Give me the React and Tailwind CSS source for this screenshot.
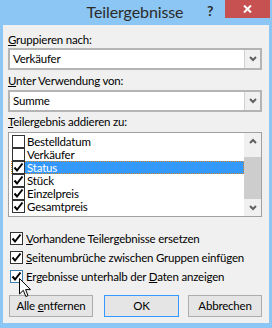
import React from "react";

const font = { fontFamily: 'Lato, "Open Sans", sans-serif' };

function Check() {
  return (
    <svg width="13" height="13" viewBox="0 0 13 13" className="block">
      <path d="M2.5 6.5 L5 9.5 L10.5 2.5" fill="none" stroke="#000" strokeWidth="2" />
    </svg>
  );
}

function Box({ checked, hover }) {
  return (
    <div
      className={
        "w-[13px] h-[13px] shrink-0 border bg-white relative " +
        (hover ? "border-[#3c7fb1]" : "border-[#333333]")
      }
    >
      {checked && (
        <div className="absolute -left-px -top-px">
          <Check />
        </div>
      )}
    </div>
  );
}

function Chevron({ up }) {
  return (
    <svg width="8" height="6" viewBox="0 0 8 6" className="block">
      <path
        d={up ? "M1 5 L4 2 L7 5" : "M1 1 L4 4 L7 1"}
        fill="none"
        stroke="#606060"
        strokeWidth="2"
      />
    </svg>
  );
}

function Combo({ value }) {
  return (
    <div className="h-[22px] flex border-2 border-[#b4b4b4] bg-white">
      <div className="flex-1 flex items-center pl-[3px] text-[11.5px] text-black">{value}</div>
      <div className="w-[16px] flex items-center justify-center bg-[#f0f0f0] border-l border-[#d0d0d0]">
        <Chevron />
      </div>
    </div>
  );
}

const items = [
  { label: "Bestelldatum", checked: false },
  { label: "Verkäufer", checked: false },
  { label: "Status", checked: true, selected: true },
  { label: "Stück", checked: true },
  { label: "Einzelpreis", checked: true },
  { label: "Gesamtpreis", checked: true },
];

function Option({ children, hover }) {
  return (
    <div className="h-[19px] flex items-center pl-[2px] text-[11.5px] text-black whitespace-nowrap">
      <Box checked hover={hover} />
      <span className="ml-[3px] leading-[15px]">{children}</span>
    </div>
  );
}

export default function App() {
  return (
    <div className="w-[272px] h-[328px] bg-[#8cc6f4] overflow-hidden tracking-[-0.2px]" style={font}>
      <div className="h-[25px] relative flex items-center justify-center pr-[2px] pb-[2px]">
        <span className="text-[16px] tracking-[-0.1px] text-[#2b2b2b]">Teilergebnisse</span>
        <span className="absolute left-[207px] top-[0px] text-[14px] font-bold text-[#2b2b2b]">?</span>
        <div className="absolute left-[225px] top-0 w-[45px] h-[18px] bg-[#c75050] flex items-center justify-center">
          <svg width="9" height="8" viewBox="0 0 9 8">
            <path d="M1 0.5 L8 7.5 M8 0.5 L1 7.5" stroke="#fff" strokeWidth="2" />
          </svg>
        </div>
      </div>

      <div className="relative ml-[3px] w-[266px] h-[298px] bg-[#f0f0f0] pl-[5px] pr-[7px] pt-[7px] flex flex-col text-black">
        <div className="h-[15px] leading-[15px] text-[11.5px]">
          <u>G</u>ruppieren nach:
        </div>
        <div className="mt-[1px]">
          <Combo value="Verkäufer" />
        </div>
        <div className="mt-[3px] h-[15px] leading-[15px] text-[11.5px]">
          <u>U</u>nter Verwendung von:
        </div>
        <div className="mt-[2px]">
          <Combo value="Summe" />
        </div>
        <div className="mt-[2px] h-[15px] leading-[15px] text-[11.5px]">
          <u>T</u>eilergebnis addieren zu:
        </div>

        <div className="mt-[3px] h-[85px] shrink-0 border border-[#a0a0a0] bg-white flex">
          <div className="flex-1 pt-[2px] pl-[2px]">
            {items.map((it) => (
              <div
                key={it.label}
                className={
                  "h-[13px] flex text-[11.5px] leading-[13px] " +
                  (it.selected ? "outline-1 outline-dotted outline-[#d4862e] -outline-offset-1" : "")
                }
              >
                <div className="ml-px">
                  <Box checked={it.checked} />
                </div>
                <span
                  className={
                    "flex-1 pl-[2px] " + (it.selected ? "bg-[#3399ff] text-white" : "text-black")
                  }
                >
                  {it.label}
                </span>
              </div>
            ))}
          </div>
          <div className="w-[17px] bg-[#f0f0f0] flex flex-col">
            <div className="h-[17px] flex items-center justify-center">
              <Chevron up />
            </div>
            <div className="mt-[7px] h-[43px] bg-[#cdcdcd]" />
            <div className="flex-1" />
            <div className="h-[17px] flex items-center justify-center">
              <Chevron />
            </div>
          </div>
        </div>

        <div className="mt-[12px]">
          <Option>
            <u>V</u>orhandene Teilergebnisse ersetzen
          </Option>
          <Option>
            <u>S</u>eitenumbrüche zwischen Gruppen einfügen
          </Option>
          <Option hover>
            Ergebnisse unterhalb der <u>D</u>aten anzeigen
          </Option>
        </div>

        <div className="mt-[9px] flex text-[11.5px]">
          <button className="ml-px w-[84px] h-[22px] border border-[#adadad] bg-[#e5e5e5] text-black">
            Alle <u>e</u>ntfernen
          </button>
          <button className="ml-[11px] w-[75px] h-[22px] border border-[#3399ff] bg-[#e5e5e5] text-black">
            OK
          </button>
          <button className="ml-[9px] w-[74px] h-[22px] border border-[#adadad] bg-[#e5e5e5] text-black">
            Abbrechen
          </button>
        </div>

        <svg
          className="absolute left-[16px] top-[253px]"
          width="13"
          height="20"
          viewBox="0 0 13 20"
        >
          <path
            d="M0.5 0.5 L0.5 16 L4.3 12.3 L6.8 18.5 L9 17.6 L6.6 11.6 L11.5 11.6 Z"
            fill="#fff"
            stroke="#000"
            strokeWidth="1"
            strokeLinejoin="round"
          />
        </svg>
      </div>
    </div>
  );
}
